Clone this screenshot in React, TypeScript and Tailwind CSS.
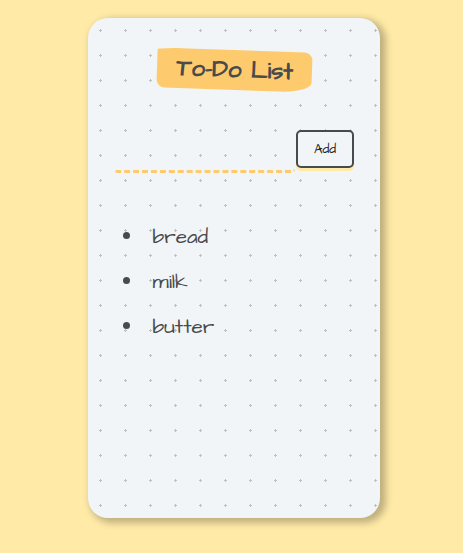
const items = ['bread', 'milk', 'butter'];

export default function App() {
  return (
    <div className="flex h-[553px] w-full items-start justify-center overflow-hidden bg-[#ffeaa7] pt-[18px] pl-[5px] font-['Architects_Daughter','Lato',cursive] text-[#494a4b]">
      <main className="h-[500px] w-[292px] rounded-[20px] bg-[#f1f5f8] bg-[radial-gradient(#bfc0c1_7.2%,transparent_0)] bg-[length:25px_25px] px-7 pt-8 shadow-[4px_3px_7px_2px_#00000040]">
        <header className="flex justify-center pl-[1.4px]">
          <h1 className="flex h-[40px] w-[155.4px] shrink-0 rotate-2 items-center justify-center rounded-[20%_5%_20%_5%/5%_20%_25%_20%] bg-[#fdcb6e] text-2xl font-bold whitespace-nowrap">
            To-Do List
          </h1>
        </header>
        <form className="mt-10 flex h-[43px] w-[238px] items-end" onSubmit={(e) => e.preventDefault()}>
          <input
            aria-label="New item"
            className="-ml-[2px] h-[38px] w-[181px] min-w-0 rounded-[4px] border-b-[3px] border-dashed border-[#fdcb6e] bg-transparent outline-none"
          />
          <button className="mb-[5px] ml-px h-[38px] w-[58px] shrink-0 rounded-[5px] border-2 border-[#494a4b] bg-[#f1f5f8] pt-px text-[13.333px] text-[#222] shadow-[0_3px_0_#ffeaa7]">
            Add
          </button>
        </form>
        <ul className="mt-10 pl-[7px]">
          {items.map((item) => (
            <li key={item} className="flex h-[45px] items-center">
              <span className="mr-[22.5px] size-[7px] rounded-full bg-[#494a4b]" />
              <span className="pt-[2px] text-[20.8px]">{item}</span>
            </li>
          ))}
        </ul>
      </main>
    </div>
  );
}
